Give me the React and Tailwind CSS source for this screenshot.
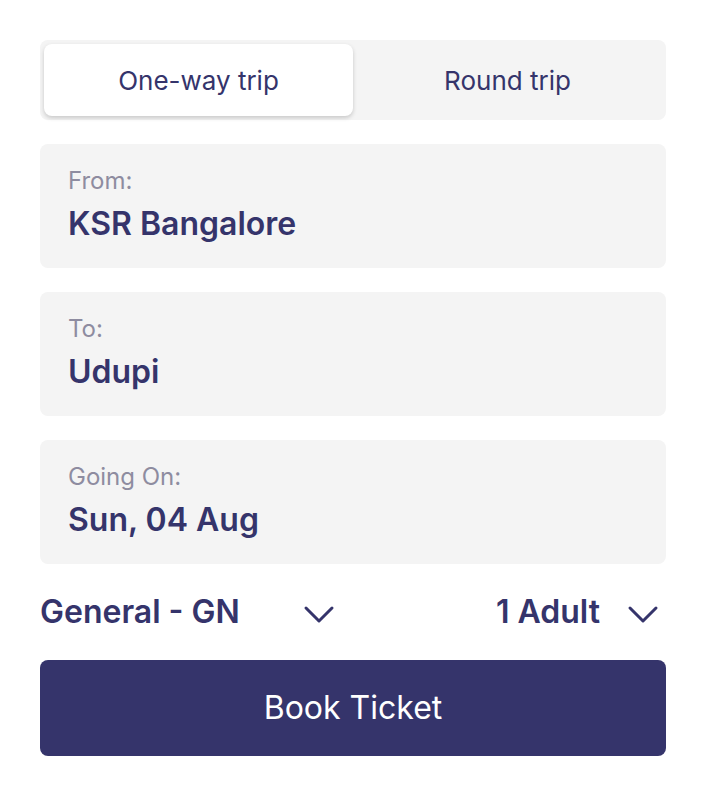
import React, { useState } from 'react';

function Chevron() {
  return (
    <svg width="32" height="20" viewBox="0 0 32 20" fill="none" stroke="#35346b" strokeWidth="3" strokeLinecap="round" strokeLinejoin="round">
      <polyline points="3,4 16,17 29,4" />
    </svg>
  );
}

function Field({ label, value }) {
  return (
    <div className="bg-[#f4f4f4] rounded-lg h-[124px] px-7 pt-[21px]">
      <p className="text-[24px] leading-[32px] text-[#8e8ca0]">{label}</p>
      <p className="text-[32px] leading-[40px] font-semibold text-[#35346b] mt-[7px]">{value}</p>
    </div>
  );
}

export default function App() {
  const [trip, setTrip] = useState('one');

  return (
    <div className="w-[706px] h-[796px] bg-white rounded-[24px] px-10 pt-10 font-['Inter',sans-serif]">
      <div className="bg-[#f4f4f4] rounded-lg h-20 p-1 flex">
        <button
          onClick={() => setTrip('one')}
          className={`flex-1 rounded-lg text-[26px] text-[#35346b] ${trip === 'one' ? 'bg-white shadow-[0_2px_4px_rgba(0,0,0,0.18)]' : ''}`}
        >
          One-way trip
        </button>
        <button
          onClick={() => setTrip('round')}
          className={`flex-1 rounded-lg text-[26px] text-[#35346b] ${trip === 'round' ? 'bg-white shadow-[0_2px_4px_rgba(0,0,0,0.18)]' : ''}`}
        >
          Round trip
        </button>
      </div>

      <div className="flex flex-col gap-6 mt-6">
        <Field label="From:" value="KSR Bangalore" />
        <Field label="To:" value="Udupi" />
        <Field label="Going On:" value="Sun, 04 Aug" />
      </div>

      <div className="flex items-center h-24">
        <div className="flex items-center w-[300px]">
          <span className="text-[32px] font-semibold text-[#35346b]">General - GN</span>
          <span className="ml-auto mr-[5px] mt-1"><Chevron /></span>
        </div>
        <div className="flex items-center ml-auto mr-[7px]">
          <span className="text-[32px] font-semibold text-[#35346b]">1 Adult</span>
          <span className="ml-[27px] mt-1"><Chevron /></span>
        </div>
      </div>

      <button className="w-full h-24 bg-[#35346b] rounded-lg text-white text-[32px]">
        Book Ticket
      </button>
    </div>
  );
}
